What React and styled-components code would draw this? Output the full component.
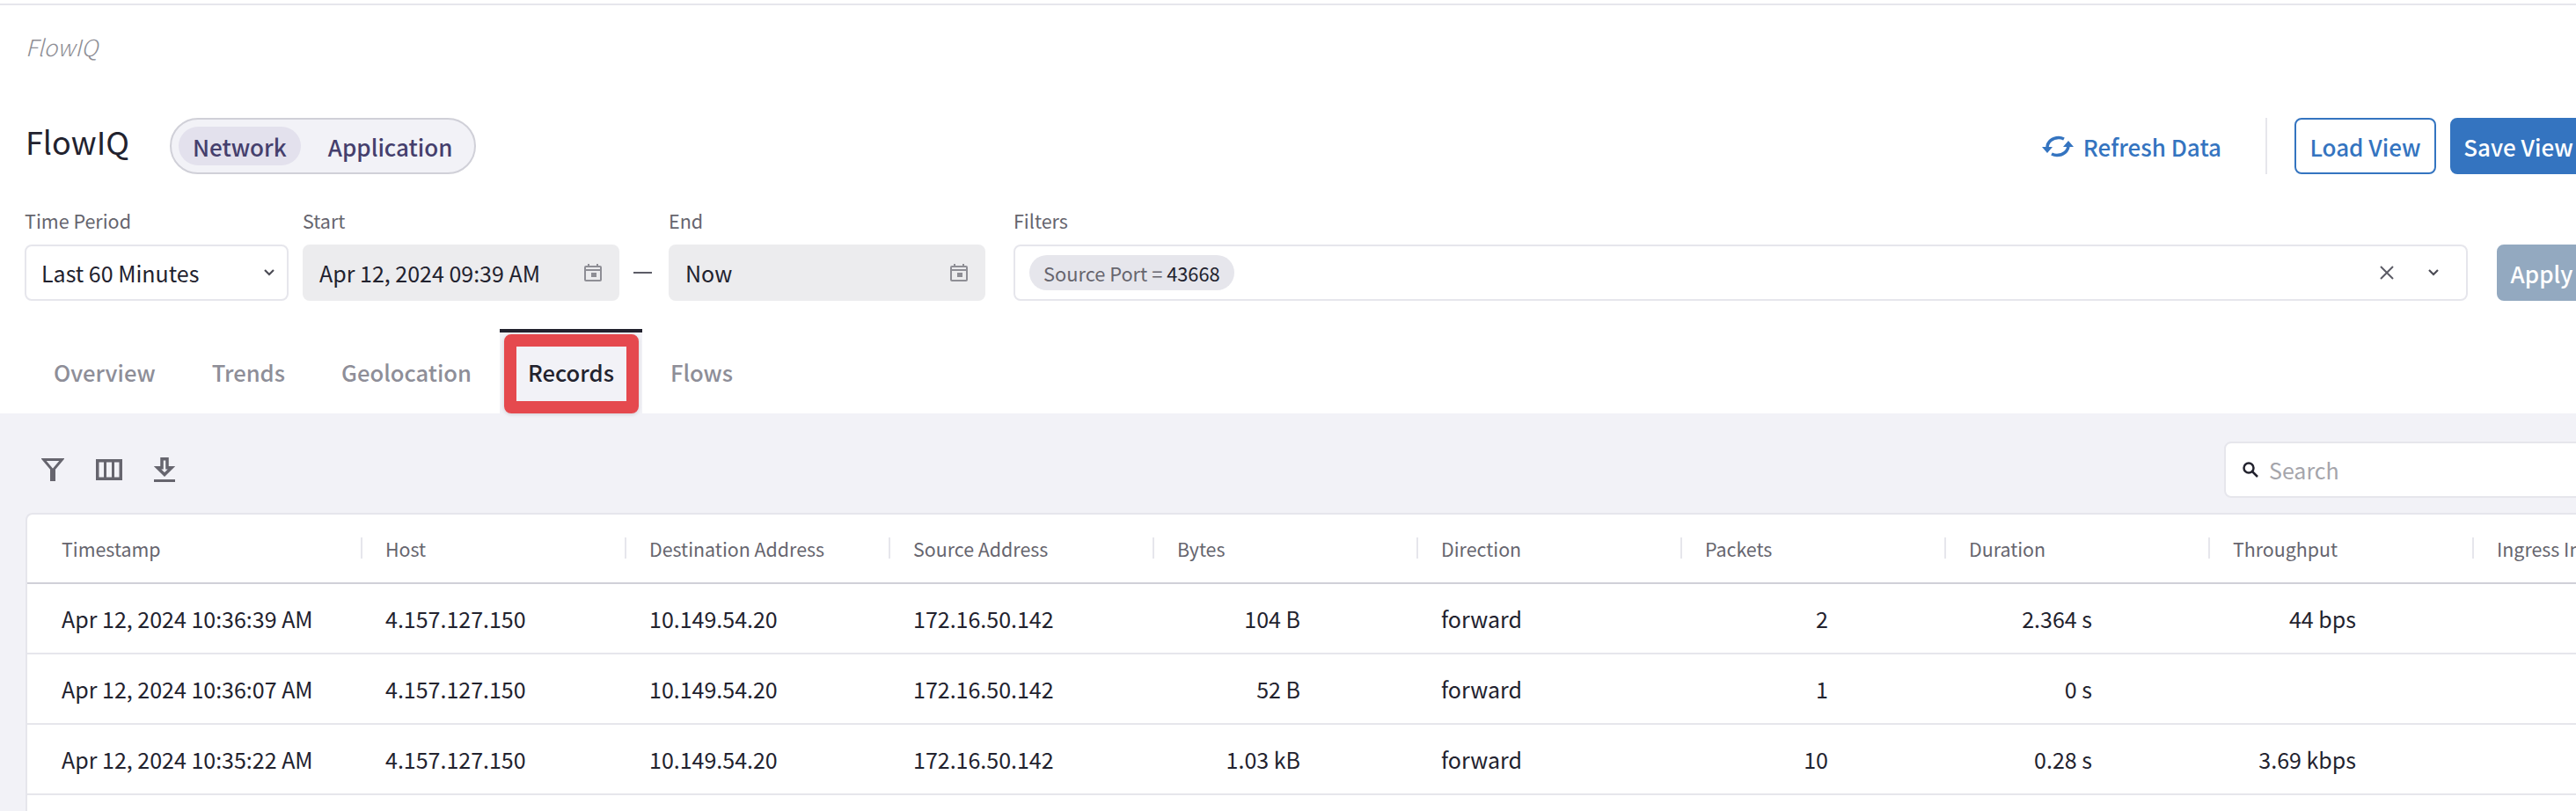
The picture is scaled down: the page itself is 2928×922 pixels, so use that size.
import React from "react";
import styled, { createGlobalStyle } from "styled-components";

const GlobalStyle = createGlobalStyle`
  html, body {
    margin: 0;
    width: 2928px;
    height: 922px;
    overflow: hidden;
    background: #fff;
  }
  body {
    font-family: "Noto Sans CJK SC", "Liberation Sans", sans-serif;
    color: #22222e;
  }
  * { box-sizing: border-box; }
`;

const Page = styled.div`
  width: 2968px;
  height: 922px;
  overflow: hidden;
  display: flex;
  flex-direction: column;
  > * { flex-shrink: 0; }
`;

const TopLine = styled.div`
  height: 2px;
  margin-top: 4px;
  background: #e6e6ec;
`;

const Crumb = styled.div`
  margin: 27px 0 0 29px;
  height: 40px;
  font-size: 26px;
  line-height: 40px;
  font-weight: 300;
  font-style: italic;
  color: #8e8e95;
`;

const HeaderRow = styled.div`
  display: flex;
  align-items: center;
  height: 64px;
  margin-top: 61px;
  padding: 0 28px 0 29px;
`;

const Title = styled.h1`
  margin: 0 0 12px;
  font-size: 36px;
  line-height: 48px;
  font-weight: 400;
  color: #22222e;
`;

const Toggle = styled.div`
  display: flex;
  height: 64px;
  margin-left: 46px;
  padding: 8px;
  background: #f2f2f7;
  border: 2px solid #d0d0d8;
  border-radius: 32px;
`;

const ToggleItem = styled.div`
  display: flex;
  align-items: center;
  height: 44px;
  padding: 0 16px;
  border-radius: 22px;
  font-size: 26px;
  font-weight: 500;
  color: #453f6d;
  background: ${(p) => (p.$active ? "#e3e1ed" : "transparent")};
  & + & { margin-left: 15px; }
`;

const Spacer = styled.div`
  flex: 1;
`;

const Refresh = styled.div`
  display: flex;
  align-items: center;
  gap: 11px;
  font-size: 26px;
  font-weight: 500;
  color: #3474c0;
`;

const Divider = styled.div`
  width: 2px;
  height: 64px;
  margin: 0 31px 0 50px;
  background: #e6e6ec;
`;

const Button = styled.div`
  display: flex;
  align-items: center;
  justify-content: center;
  flex: none;
  width: ${(p) => p.$width}px;
  height: 64px;
  border-radius: 8px;
  font-size: 26px;
  font-weight: 500;
  border: 2px solid #3474c0;
  color: ${(p) => (p.$primary ? "#fff" : "#3474c0")};
  background: ${(p) => (p.$primary ? "#3474c0" : "#fff")};
  margin-left: ${(p) => (p.$primary ? "16px" : "0")};
`;

const FilterRow = styled.div`
  display: flex;
  align-items: flex-end;
  margin-top: 36px;
  padding: 0 28px;
`;

const Field = styled.div`
  display: flex;
  flex-direction: column;
  gap: 10px;
  flex: ${(p) => (p.$grow ? 1 : "none")};
  width: ${(p) => (p.$width ? `${p.$width}px` : "auto")};
  margin-right: ${(p) => p.$gap || 0}px;
`;

const Label = styled.label`
  height: 34px;
  font-size: 21.5px;
  line-height: 34px;
  color: #66656e;
`;

const Control = styled.div`
  display: flex;
  align-items: center;
  justify-content: space-between;
  height: 64px;
  padding: 0 ${(p) => p.$pad || 18}px 0 17px;
  border: 2px solid ${(p) => (p.$disabled ? "#ececee" : "#e6e6ec")};
  border-radius: 8px;
  background: ${(p) => (p.$disabled ? "#ececee" : "#fff")};
  font-size: 25px;
  color: #22222e;
`;

const Dash = styled.div`
  width: 56px;
  height: 64px;
  padding-right: 3px;
  display: flex;
  align-items: center;
  justify-content: center;
  &::before {
    content: "";
    width: 21px;
    height: 2px;
    background: #5c5c66;
  }
`;

const Chip = styled.div`
  display: flex;
  align-items: center;
  height: 40px;
  padding: 0 16px;
  border-radius: 20px;
  background: #e6e6ec;
  font-size: 21.8px;
  color: #66656e;
  white-space: pre;
  & b {
    font-weight: 400;
    color: #22222e;
  }
`;

const FilterControl = styled(Control)`
  padding: 0 31px 0 16px;
`;

const ControlIcons = styled.div`
  display: flex;
  align-items: center;
  gap: 39px;
`;

const ApplyButton = styled(Button)`
  margin-left: 33px;
  background: #93a9c0;
  border-color: #93a9c0;
  color: #fff;
`;

const Tabs = styled.div`
  display: flex;
  height: 96px;
  margin-top: 32px;
  padding-left: 29px;
`;

const Tab = styled.div`
  position: relative;
  display: flex;
  align-items: center;
  height: 96px;
  padding: 0 32px 4px;
  font-size: 25.6px;
  font-weight: 500;
  color: ${(p) => (p.$active ? "#22222e" : "#8e8e98")};
  background: ${(p) => (p.$active ? "#f2f2f7" : "transparent")};
  border-top: 4px solid ${(p) => (p.$active ? "#22222e" : "transparent")};
`;

const Marker = styled.div`
  position: absolute;
  left: 5px;
  right: 4px;
  top: 2px;
  bottom: 0;
  border: 14px solid #e5494e;
  border-radius: 8px;
  box-shadow: 0 1px 4px rgba(0, 0, 0, 0.15);
`;

const Section = styled.div`
  flex: 1 0 auto;
  background: #f2f2f7;
  padding: 32px 0 0 29px;
`;

const Toolbar = styled.div`
  display: flex;
  align-items: center;
  height: 64px;
  margin-bottom: 17px;
  padding-left: 18px;
  gap: 36px;
  color: #66656e;
`;

const SearchBox = styled.div`
  display: flex;
  align-items: center;
  gap: 12px;
  width: 440px;
  height: 64px;
  margin-left: auto;
  padding-left: 19px;
  background: #fff;
  border: 2px solid #e6e6ec;
  border-radius: 8px;
  font-size: 25px;
  color: #a5a5ab;
`;

const Table = styled.div`
  background: #fff;
  border: 2px solid #e6e6ec;
  border-right: 0;
  border-radius: 8px 0 0 0;
`;

const Row = styled.div`
  display: grid;
  grid-template-columns: 379px repeat(9, 300px);
  height: ${(p) => (p.$head ? "79px" : "80px")};
  border-bottom: 2px solid ${(p) => (p.$head ? "#d0d0d8" : "#e6e6ec")};
`;

const HeadCell = styled.div`
  position: relative;
  display: flex;
  align-items: center;
  padding-left: ${(p) => (p.$first ? "39px" : "28px")};
  font-size: 21.4px;
  color: #66656e;
  white-space: nowrap;
  &::before {
    content: "";
    display: ${(p) => (p.$first ? "none" : "block")};
    position: absolute;
    left: 0;
    top: 26px;
    width: 2px;
    height: 24px;
    background: #e6e6ec;
  }
`;

const Cell = styled.div`
  display: flex;
  align-items: center;
  justify-content: ${(p) => (p.$right ? "flex-end" : "flex-start")};
  padding: ${(p) => (p.$first ? "0 0 0 39px" : p.$right ? "0 132px 0 0" : "0 0 0 28px")};
  font-size: 25px;
  color: #22222e;
  white-space: nowrap;
`;

const columns = [
  "Timestamp",
  "Host",
  "Destination Address",
  "Source Address",
  "Bytes",
  "Direction",
  "Packets",
  "Duration",
  "Throughput",
  "Ingress Interface",
];

const rightAligned = [4, 6, 7, 8];

const records = [
  ["Apr 12, 2024 10:36:39 AM", "4.157.127.150", "10.149.54.20", "172.16.50.142", "104 B", "forward", "2", "2.364 s", "44 bps", ""],
  ["Apr 12, 2024 10:36:07 AM", "4.157.127.150", "10.149.54.20", "172.16.50.142", "52 B", "forward", "1", "0 s", "", ""],
  ["Apr 12, 2024 10:35:22 AM", "4.157.127.150", "10.149.54.20", "172.16.50.142", "1.03 kB", "forward", "10", "0.28 s", "3.69 kbps", ""],
  ["", "", "", "", "", "", "", "", "", ""],
];

const RefreshIcon = () => (
  <svg width="36" height="25" viewBox="14 13 36 25" fill="none" stroke="#3474c0" strokeWidth="3.5">
    <path d="M20 27C20 20 26 15.5 33 15.5C35 15.5 37 16 39 17" />
    <path d="M44 24C44 31 38 35.5 31 35.5C29 35.5 27 35 25 34" />
    <path d="M14 26H26L20 33zM38 26H50L44 19z" fill="#3474c0" stroke="none" />
  </svg>
);

const Chevron = () => (
  <svg width="12" height="8" viewBox="0 0 12 8" fill="none">
    <path d="M1 1l5 5 5-5" stroke="#4c4c55" strokeWidth="2.2" />
  </svg>
);

const CalendarIcon = () => (
  <svg width="20" height="20" viewBox="0 0 20 20" fill="none" stroke="#8e8e95" strokeWidth="2">
    <path d="M5 0v3M15 0v3" />
    <rect x="1" y="3" width="18" height="16" rx="1" />
    <path d="M1 7h18" />
    <rect x="8" y="10" width="6" height="5" fill="#8e8e95" stroke="none" />
  </svg>
);

const CloseIcon = () => (
  <svg width="16" height="16" viewBox="0 0 16 16" fill="none">
    <path d="M1 1l14 14M15 1L1 15" stroke="#5c5c66" strokeWidth="2" />
  </svg>
);

const FunnelIcon = () => (
  <svg width="26" height="26" viewBox="0 0 26 26" fill="none" stroke="currentColor">
    <path d="M2.5 1.5h21L13 14z" strokeWidth="3" strokeLinejoin="miter" />
    <path d="M13 13v13" strokeWidth="6" />
  </svg>
);

const ColumnsIcon = () => (
  <svg width="30" height="24" viewBox="0 0 30 24" fill="none" stroke="currentColor" strokeWidth="3.5">
    <rect x="1.75" y="1.75" width="26.5" height="20.5" />
    <path d="M10.5 2v20M19.5 2v20" strokeWidth="3" />
  </svg>
);

const DownloadIcon = () => (
  <svg width="24" height="28" viewBox="0 0 24 28" fill="none" stroke="currentColor" strokeWidth="3.5">
    <path d="M9 1.75h6v10h5L12 19.5 4 11.75h5z" />
    <path d="M0 26.5h24" strokeWidth="3" />
  </svg>
);

const SearchIcon = () => (
  <svg width="18" height="18" viewBox="0 0 18 18" fill="none" stroke="#22222e" strokeWidth="2.5">
    <circle cx="7" cy="7" r="5.5" />
    <path d="M11 11l6 6" />
  </svg>
);

export default function App() {
  return (
    <Page>
      <GlobalStyle />
      <TopLine />
      <Crumb>FlowIQ</Crumb>
      <HeaderRow>
        <Title>FlowIQ</Title>
        <Toggle>
          <ToggleItem $active>Network</ToggleItem>
          <ToggleItem>Application</ToggleItem>
        </Toggle>
        <Spacer />
        <Refresh>
          <RefreshIcon />
          Refresh Data
        </Refresh>
        <Divider />
        <Button $width={161}>Load View</Button>
        <Button $primary $width={155}>Save View</Button>
      </HeaderRow>
      <FilterRow>
        <Field $width={300} $gap={16}>
          <Label>Time Period</Label>
          <Control $pad={14}>
            Last 60 Minutes
            <Chevron />
          </Control>
        </Field>
        <Field $width={360}>
          <Label>Start</Label>
          <Control $disabled>
            Apr 12, 2024 09:39 AM
            <CalendarIcon />
          </Control>
        </Field>
        <Dash />
        <Field $width={360} $gap={32}>
          <Label>End</Label>
          <Control $disabled>
            Now
            <CalendarIcon />
          </Control>
        </Field>
        <Field $grow>
          <Label>Filters</Label>
          <FilterControl>
            <Chip>
              {"Source Port = "}
              <b>43668</b>
            </Chip>
            <ControlIcons>
              <CloseIcon />
              <Chevron />
            </ControlIcons>
          </FilterControl>
        </Field>
        <ApplyButton $width={102}>Apply</ApplyButton>
      </FilterRow>
      <Tabs>
        <Tab>Overview</Tab>
        <Tab>Trends</Tab>
        <Tab>Geolocation</Tab>
        <Tab $active>
          Records
          <Marker />
        </Tab>
        <Tab>Flows</Tab>
      </Tabs>
      <Section>
        <Toolbar>
          <FunnelIcon />
          <ColumnsIcon />
          <DownloadIcon />
          <SearchBox>
            <SearchIcon />
            Search
          </SearchBox>
        </Toolbar>
        <Table>
          <Row $head>
            {columns.map((c, i) => (
              <HeadCell key={c} $first={i === 0}>
                {c}
              </HeadCell>
            ))}
          </Row>
          {records.map((r, ri) => (
            <Row key={ri}>
              {r.map((v, i) => (
                <Cell key={i} $first={i === 0} $right={rightAligned.includes(i)}>
                  {v}
                </Cell>
              ))}
            </Row>
          ))}
        </Table>
      </Section>
    </Page>
  );
}
